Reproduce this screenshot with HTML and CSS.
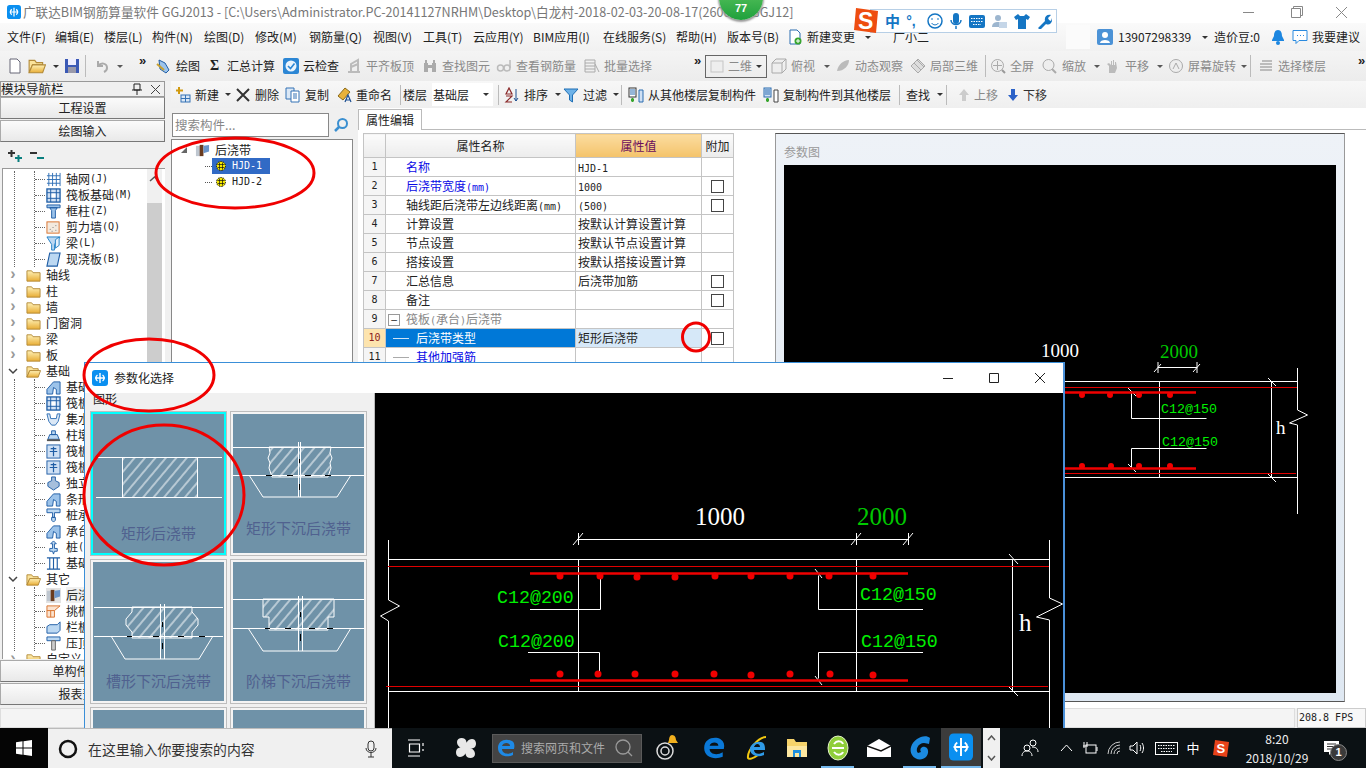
FILE: index.html
```html
<!DOCTYPE html>
<html lang="zh-CN">
<head>
<meta charset="utf-8">
<title>广联达BIM钢筋算量软件</title>
<link rel="stylesheet" href="styles.css">
</head>
<body>
<svg class="defs" aria-hidden="true">
  <defs>
    <pattern id="hatch" width="8" height="8" patternUnits="userSpaceOnUse" patternTransform="rotate(-50)"><line x1="0" y1="4" x2="8" y2="4" stroke="#fff" stroke-width="1"/></pattern>
    <linearGradient id="fold" x1="0" y1="0" x2="0" y2="1"><stop offset="0" stop-color="#fff2b8"/><stop offset="1" stop-color="#e8ad35"/></linearGradient>
    <symbol id="logo" viewBox="0 0 16 16"><rect x="0" y="0" width="16" height="16" rx="3" fill="#0a8ff0"/><path d="M8 3v10M3 8h10M5.500 5a3.600 3.600 0 0 0 0 6M10.500 5a3.600 3.600 0 0 1 0 6" fill="none" stroke="#fff" stroke-width="1.400"/></symbol>
    <symbol id="folder" viewBox="0 0 16 16"><path d="M1 3h5l1.500 2H15v9H1z" fill="url(#fold)" stroke="#b38b3a"/></symbol>
    <symbol id="folderopen" viewBox="0 0 16 16"><path d="M1 3h5l1.500 2H13v2H4L1 14z" fill="#fbe39a" stroke="#b38b3a"/><path d="M4 7h11.500L13 14H1z" fill="url(#fold)" stroke="#b38b3a"/></symbol>
    <symbol id="grid" viewBox="0 0 16 16"><path d="M3 1v14M7 1v14M11 1v14M15 1v14M1 4h14M1 8h14M1 12h14" stroke="#2f6fb5" fill="none"/></symbol>
    <symbol id="raft" viewBox="0 0 16 16"><rect x="1" y="1" width="14" height="14" fill="#cfe0f4" stroke="#1f5da5" stroke-width="1.400"/><path d="M5 1v14M11 1v14M1 5h14M1 11h14" stroke="#1f5da5"/><rect x="6" y="6" width="4" height="4" fill="#fff"/></symbol>
    <symbol id="col" viewBox="0 0 16 16"><path d="M1 1h14v3H1zM4 4h8L10 7v8H6V7z" fill="#9cc3ea" stroke="#1f5da5"/></symbol>
    <symbol id="wall" viewBox="0 0 16 16"><rect x="1" y="2" width="13" height="12" fill="#f3eadf" stroke="#d8712c"/><path d="M4 10h1M7 8h1M10 11h1M6 12h1M10 6h1" stroke="#777"/></symbol>
    <symbol id="beam" viewBox="0 0 16 16"><path d="M1 1h14L9 9v6H6V9z" fill="#bcd8f2" stroke="#1f7fc5"/><path d="M10 4l4-3v9l-4 3z" fill="#e6f1fb" stroke="#1f7fc5"/></symbol>
    <symbol id="slab" viewBox="0 0 16 16"><path d="M4 1h11l-3 14H1z" fill="#bcd8f2" stroke="#1f5da5" stroke-width="1.200"/></symbol>
    <symbol id="fbeam" viewBox="0 0 16 16"><path d="M1 15v-5l7-8h7v13h-4v-5l-3-2-1 7z" fill="#9cc3ea" stroke="#1f5da5"/></symbol>
    <symbol id="pit" viewBox="0 0 16 16"><path d="M1 2h3l1 5h6l1-5h3l-2 8-3 4H6l-3-4z" fill="#dbe8f6" stroke="#2f6fb5"/></symbol>
    <symbol id="pier" viewBox="0 0 16 16"><path d="M6 3h4v4H6zM4 7h8l2 5H2z" fill="#bcd8f2" stroke="#1f5da5"/><path d="M1 13h14" stroke="#555" stroke-width="2"/></symbol>
    <symbol id="cross" viewBox="0 0 16 16"><rect x="1" y="1" width="14" height="14" fill="#cfe0f4" stroke="#1f5da5"/><path d="M8 3v10M4 8h8M5 5h6" stroke="#1f5da5" stroke-width="1.300"/></symbol>
    <symbol id="bolt" viewBox="0 0 16 16"><path d="M6 1h4v4l4 2v4l-6 4-6-4V7l4-2z" fill="#a6bfdc" stroke="#1f5da5"/></symbol>
    <symbol id="cap" viewBox="0 0 16 16"><path d="M1 1h14v4H9v5H7V5H1zM6 10h4v3l-2 2-2-2z" fill="#bcd8f2" stroke="#1f5da5"/></symbol>
    <symbol id="pile" viewBox="0 0 16 16"><path d="M8 1l3 3H9v5h3v3H9l-1 3-1-3H4V9h3V4H5z" fill="#bcd8f2" stroke="#1f5da5"/></symbol>
    <symbol id="strip" viewBox="0 0 16 16"><path d="M1 2h14M1 14h14M4 2v12M8 2v12M12 2v12" stroke="#1f5da5" fill="none" stroke-width="1.200"/></symbol>
    <symbol id="jd" viewBox="0 0 16 16"><path d="M1 3h5v11H1z" fill="#bfc7d0"/><path d="M5 2h4v12H5z" fill="#6a3b1e"/><path d="M9 3l6-1v7l-6 2z" fill="#6b95c9"/></symbol>
    <symbol id="eave" viewBox="0 0 16 16"><path d="M1 2h14L9 7v7H1z" fill="#fbe3cf" stroke="#d8712c"/><path d="M1 7h8M5 7v7" stroke="#d8712c"/></symbol>
    <symbol id="rail" viewBox="0 0 16 16"><path d="M1 7l3-2h8l3-3v9l-3 3H1z" fill="#bcd8f2" stroke="#1f5da5"/></symbol>
    <symbol id="top" viewBox="0 0 16 16"><path d="M1 1h14v4H1z" fill="#bcd8f2" stroke="#1f5da5"/><path d="M6 5h4v10H6z" fill="#ccc" stroke="#666"/></symbol>
    <symbol id="hjd" viewBox="0 0 12 12"><circle cx="6" cy="6" r="4.500" fill="#f7ea00" stroke="#111" stroke-dasharray="1.500 1"/><path d="M2.500 4.500h7M2.500 7.500h7M4.500 2.500v7M7.500 2.500v7" stroke="#111" stroke-width=".7"/></symbol>
    <symbol id="arr" viewBox="0 0 7 7"><path d="M0 2h6L3 5z"/></symbol>
  </defs>
</svg>

<div class="app">
  <header class="titlebar">
    <svg class="ic14"><use href="#logo"/></svg>
    <span class="titletext">广联达BIM钢筋算量软件 GGJ2013 - [C:\Users\Administrator.PC-20141127NRHM\Desktop\白龙村-2018-02-03-20-08-17(2600版).GGJ12]</span>
    <div class="winbtns">
      <svg width="50" height="12" viewBox="0 0 50 12"><path d="M20 6.500h11" stroke="#888"/></svg>
      <svg width="46" height="12" viewBox="0 0 46 12"><path d="M18.500 2.500h9v9h-9zM20.500 2.500V.5h9v9h-2" fill="none" stroke="#888"/></svg>
      <svg width="46" height="12" viewBox="0 0 46 12"><path d="M17 1l11 11M28 1L17 12" stroke="#888"/></svg>
    </div>
  </header>

  <nav class="menubar">
    <span>文件(F)</span><span>编辑(E)</span><span>楼层(L)</span><span>构件(N)</span><span>绘图(D)</span><span>修改(M)</span><span>钢筋量(Q)</span><span>视图(V)</span><span>工具(T)</span><span>云应用(Y)</span><span>BIM应用(I)</span><span>在线服务(S)</span><span>帮助(H)</span><span>版本号(B)</span>
    <span class="ti"><svg class="ic16" viewBox="0 0 16 16"><path d="M3 1h7l3 3v11H3z" fill="#fff" stroke="#2b6cb0"/><circle cx="11" cy="12" r="3.500" fill="#38a52e"/><path d="M9 12h4M11 10v4" stroke="#fff"/></svg>新建变更<svg class="arr arrgap"><use href="#arr"/></svg></span>
    <span>广小二</span>
    <span class="menublank"></span>
    <span class="ti user"><svg class="ic16" viewBox="0 0 16 16"><rect width="16" height="16" rx="2" fill="#4b92d6"/><circle cx="8" cy="6" r="3" fill="#fff"/><path d="M3 14c0-4 10-4 10 0z" fill="#fff"/></svg>13907298339<svg class="arr arrgap"><use href="#arr"/></svg></span>
    <span>造价豆:0</span>
    <svg class="ic16" viewBox="0 0 16 16"><path d="M8 1c3 0 4 3 4 6l2 4v1H2v-1l2-4c0-3 1-6 4-6z" fill="#1c86e0"/><circle cx="8" cy="14" r="2" fill="#1c86e0"/></svg>
    <span class="ti"><svg class="ic16" viewBox="0 0 16 16"><path d="M1 1.500h14v10H7l-3 3v-3H1z" fill="#fff" stroke="#2a8adf"/><path d="M5 6.500h1M8 6.500h1M11 6.500h1" stroke="#2a8adf"/></svg>我要建议</span>
  </nav>

  <div class="toolbar1">
    <svg class="ic16" viewBox="0 0 16 16"><path d="M3 1h7l3 3v11H3z" fill="#fff" stroke="#667"/></svg>
    <svg class="ic18" viewBox="0 0 16 16"><use href="#folderopen"/></svg>
    <svg class="arr"><use href="#arr"/></svg>
    <svg class="ic16" viewBox="0 0 16 16"><rect x="1" y="1" width="14" height="14" fill="#3b59b5"/><rect x="4" y="1" width="8" height="6" fill="#eef"/><rect x="4" y="9" width="8" height="6" fill="#99a"/></svg>
    <i class="sep"></i>
    <svg class="ic16 dim" viewBox="0 0 16 16"><path d="M4 3v5h5M4 8c3-4 9-3 9 2 0 2-1 3-3 4" fill="none" stroke="#999" stroke-width="2"/></svg>
    <svg class="arr dim"><use href="#arr"/></svg>
    <b class="more">»</b>
    <span class="ti"><svg class="ic16" viewBox="0 0 16 16"><path d="M3 2l6 3 4 7-3 3-6-4z" fill="#9cc3ea" stroke="#1f5da5"/><path d="M1 6l7 6" stroke="#c9a02e" stroke-width="2"/></svg>绘图</span>
    <span class="ti sigma"><b>Σ</b>汇总计算</span>
    <span class="ti"><svg class="ic16" viewBox="0 0 16 16"><rect width="16" height="16" rx="2" fill="#2c86d4"/><circle cx="8" cy="8" r="5.500" fill="#eaf4fd"/><path d="M5 8l2.500 2.500L11.500 5.500" fill="none" stroke="#2c86d4" stroke-width="1.600"/></svg>云检查</span>
    <span class="ti off"><svg class="ic16" viewBox="0 0 16 16"><path d="M2 14h12M5 14V6l7-4v12M5 9l7-3" fill="none" stroke="#bbb" stroke-width="2"/></svg>平齐板顶</span>
    <span class="ti off"><svg class="ic16" viewBox="0 0 16 16"><path d="M2 5h4v9H2zM10 5h4v9h-4zM6 7h4v3H6zM3 2h2v3H3zM11 2h2v3h-2z" fill="#aaa"/></svg>查找图元</span>
    <span class="ti off"><svg class="ic16" viewBox="0 0 16 16"><circle cx="4.500" cy="10" r="3" fill="none" stroke="#bbb" stroke-width="1.500"/><circle cx="11" cy="10" r="3" fill="none" stroke="#bbb" stroke-width="1.500"/><path d="M14 10V2" stroke="#bbb" stroke-width="1.500"/></svg>查看钢筋量</span>
    <span class="ti off"><svg class="ic16" viewBox="0 0 16 16"><path d="M1 2h10v12H1zM1 5h10M1 8h10M1 11h10M11 6l4 8" fill="none" stroke="#aaa"/></svg>批量选择</span>
    <b class="more">»</b>
    <span class="combo2d"><svg class="ic16 dim" viewBox="0 0 16 16"><rect x="2" y="3" width="12" height="11" fill="#eee" stroke="#bbb"/></svg><span class="offtxt">二维</span><svg class="arr"><use href="#arr"/></svg></span>
    <span class="ti off"><svg class="ic16" viewBox="0 0 16 16"><path d="M1 5h10v10H1zM1 5l4-4h10L11 5M11 15l4-4V1" fill="#eee" stroke="#aaa"/></svg>俯视</span>
    <svg class="arr dim"><use href="#arr"/></svg>
    <span class="ti off"><svg class="ic16" viewBox="0 0 16 16"><path d="M2 13C3 7 8 2 14 2 14 8 9 13 2 13z" fill="#bbb"/></svg>动态观察</span>
    <span class="ti off"><svg class="ic16" viewBox="0 0 16 16"><path d="M8 1l7 7-7 7-7-7z" fill="#ddd" stroke="#aaa"/><path d="M4 5l7 7M7 2l7 7" stroke="#aaa"/></svg>局部三维</span>
    <i class="sep"></i>
    <span class="ti off"><svg class="ic16" viewBox="0 0 16 16"><circle cx="7.500" cy="7.500" r="6" fill="#eee" stroke="#aaa"/><path d="M7.500 3v9M3 7.500h9" stroke="#aaa"/><path d="M12 12l3 3" stroke="#999" stroke-width="2"/></svg>全屏</span>
    <span class="ti off"><svg class="ic16" viewBox="0 0 16 16"><circle cx="6.500" cy="7" r="5.500" fill="#eee" stroke="#aaa"/><path d="M10 11l4 4" stroke="#aaa" stroke-width="2"/></svg>缩放</span>
    <svg class="arr dim"><use href="#arr"/></svg>
    <span class="ti off"><svg class="ic16" viewBox="0 0 16 16"><path d="M4 15V8l-2-2 2-1 2 2V3h1v4h1V2h1v5h1V4h1l1 6-2 5z" fill="#bbb"/></svg>平移</span>
    <svg class="arr dim"><use href="#arr"/></svg>
    <span class="ti off"><svg class="ic16" viewBox="0 0 16 16"><circle cx="8" cy="8" r="6.500" fill="#eee" stroke="#aaa"/><path d="M5 11l3-6 3 6" fill="none" stroke="#aaa"/></svg>屏幕旋转</span>
    <svg class="arr dim"><use href="#arr"/></svg>
    <i class="sep"></i>
    <span class="ti off"><svg class="ic16" viewBox="0 0 16 16"><path d="M2 6h12M2 9h12M2 12h12M4 3h10" stroke="#aaa" stroke-width="1.500"/></svg>选择楼层</span>
    <b class="more">»</b>
  </div>

  <div class="main">
    <aside class="leftpanel">
      <div class="navhead"><span>模块导航栏</span><span class="navbtns"><svg width="10" height="12" viewBox="0 0 10 12"><path d="M2 1h6v6H2zM0 7h10M5 7v5" stroke="#222" fill="none"/></svg><svg width="9" height="9" viewBox="0 0 9 9"><path d="M0 0l9 9M9 0L0 9" stroke="#444"/></svg></span></div>
      <div class="navbtn">工程设置</div>
      <div class="navbtn">绘图输入</div>
      <div class="treeicons"><svg width="16" height="14" viewBox="0 0 16 14"><path d="M1 4h7M4.500 1v7" stroke="#333" stroke-width="2"/><path d="M8 9h7M11.500 6v7" stroke="#0a7f7f" stroke-width="2"/></svg><svg width="16" height="14" viewBox="0 0 16 14"><path d="M1 4h7" stroke="#333" stroke-width="2"/><path d="M8 9h7" stroke="#0a7f7f" stroke-width="2"/></svg></div>
      <div class="treebox">
        <div class="tree">
          <div class="g1"><div class="g2">
            <div class="r2"><svg class="ic15"><use href="#grid"/></svg>轴网<span class="lat">(J)</span></div>
            <div class="r2"><svg class="ic15"><use href="#raft"/></svg>筏板基础<span class="lat">(M)</span></div>
            <div class="r2"><svg class="ic15"><use href="#col"/></svg>框柱<span class="lat">(Z)</span></div>
            <div class="r2"><svg class="ic15"><use href="#wall"/></svg>剪力墙<span class="lat">(Q)</span></div>
            <div class="r2"><svg class="ic15"><use href="#beam"/></svg>梁<span class="lat">(L)</span></div>
            <div class="r2"><svg class="ic15"><use href="#slab"/></svg>现浇板<span class="lat">(B)</span></div>
          </div></div>
          <div class="r1"><i class="chev">›</i><svg class="ic15"><use href="#folder"/></svg>轴线</div>
          <div class="r1"><i class="chev">›</i><svg class="ic15"><use href="#folder"/></svg>柱</div>
          <div class="r1"><i class="chev">›</i><svg class="ic15"><use href="#folder"/></svg>墙</div>
          <div class="r1"><i class="chev">›</i><svg class="ic15"><use href="#folder"/></svg>门窗洞</div>
          <div class="r1"><i class="chev">›</i><svg class="ic15"><use href="#folder"/></svg>梁</div>
          <div class="r1"><i class="chev">›</i><svg class="ic15"><use href="#folder"/></svg>板</div>
          <div class="r1"><svg class="chevopen" viewBox="0 0 10 7"><path d="M1 1l4 4 4-4" fill="none" stroke="#444" stroke-width="1.500"/></svg><svg class="ic15"><use href="#folderopen"/></svg>基础</div>
          <div class="g1"><div class="g2">
            <div class="r2"><svg class="ic15"><use href="#fbeam"/></svg>基础梁<span class="lat">(F)</span></div>
            <div class="r2"><svg class="ic15"><use href="#raft"/></svg>筏板基础<span class="lat">(M)</span></div>
            <div class="r2"><svg class="ic15"><use href="#pit"/></svg>集水坑<span class="lat">(K)</span></div>
            <div class="r2"><svg class="ic15"><use href="#pier"/></svg>柱墩<span class="lat">(Y)</span></div>
            <div class="r2"><svg class="ic15"><use href="#cross"/></svg>筏板主筋<span class="lat">(R)</span></div>
            <div class="r2"><svg class="ic15"><use href="#cross"/></svg>筏板负筋<span class="lat">(X)</span></div>
            <div class="r2"><svg class="ic15"><use href="#bolt"/></svg>独立基础<span class="lat">(D)</span></div>
            <div class="r2"><svg class="ic15"><use href="#fbeam"/></svg>条形基础<span class="lat">(T)</span></div>
            <div class="r2"><svg class="ic15"><use href="#cap"/></svg>桩承台<span class="lat">(V)</span></div>
            <div class="r2"><svg class="ic15"><use href="#fbeam"/></svg>承台梁<span class="lat">(F)</span></div>
            <div class="r2"><svg class="ic15"><use href="#pile"/></svg>桩<span class="lat">(U)</span></div>
            <div class="r2"><svg class="ic15"><use href="#strip"/></svg>基础板带<span class="lat">(W)</span></div>
          </div></div>
          <div class="r1"><svg class="chevopen" viewBox="0 0 10 7"><path d="M1 1l4 4 4-4" fill="none" stroke="#444" stroke-width="1.500"/></svg><svg class="ic15"><use href="#folderopen"/></svg>其它</div>
          <div class="g1"><div class="g2">
            <div class="r2"><svg class="ic15 hl"><use href="#jd"/></svg><span class="hltxt">后浇带<span class="lat">(JD)</span></span></div>
            <div class="r2"><svg class="ic15"><use href="#eave"/></svg>挑檐<span class="lat">(T)</span></div>
            <div class="r2"><svg class="ic15"><use href="#rail"/></svg>栏板<span class="lat">(K)</span></div>
            <div class="r2"><svg class="ic15"><use href="#top"/></svg>压顶<span class="lat">(YD)</span></div>
          </div></div>
          <div class="r1"><i class="chev">›</i><svg class="ic15"><use href="#folder"/></svg>自定义</div>
        </div>
        <div class="vscroll"><svg width="15" height="12" viewBox="0 0 15 12"><path d="M3 8l4.500-4L12 8" fill="none" stroke="#555" stroke-width="1.500"/></svg><div class="thumb"></div></div>
      </div>
      <div class="navbtn">单构件输入</div>
      <div class="navbtn">报表预览</div>
    </aside>

    <div class="rightcol">
      <div class="toolbar2">
        <span class="ti"><svg class="ic16" viewBox="0 0 16 16"><path d="M4 0v7M1 3.500h7" stroke="#d09a10" stroke-width="2"/><rect x="6" y="8" width="9" height="7" fill="#dbe8f6" stroke="#3472b5"/><path d="M6 11.500h9M10.500 8v7" stroke="#3472b5"/></svg>新建</span>
        <svg class="arr"><use href="#arr"/></svg>
        <span class="ti del"><svg class="ic14b" viewBox="0 0 14 14"><path d="M1 1l12 12M13 1L1 13" stroke="#333" stroke-width="2"/></svg>删除</span>
        <span class="ti"><svg class="ic16" viewBox="0 0 16 16"><path d="M1 1h8v11H1z" fill="#dbe8f6" stroke="#3472b5"/><path d="M6 4h8v11H6z" fill="#fff" stroke="#3472b5"/><path d="M8 7h4M8 9h4M8 11h4" stroke="#3472b5"/></svg>复制</span>
        <span class="ti"><svg class="ic16" viewBox="0 0 16 16"><path d="M2 9l7-8 5 4-7 8z" fill="#e9b23a" stroke="#8a6a1a"/><path d="M9 15l3-7 3 7M10 13h4" fill="none" stroke="#1d4f91" stroke-width="1.200"/></svg>重命名</span>
        <i class="sep"></i>
        <span>楼层</span>
        <span class="floorcombo">基础层<svg class="arr"><use href="#arr"/></svg></span>
        <i class="sep"></i>
        <span class="ti"><svg class="ic16" viewBox="0 0 16 16"><path d="M5 1L2 7h6zM2 9h6L2 15h6" fill="none" stroke="#8a2a2a" stroke-width="1.200"/><path d="M12 2v12M10 11l2 3 2-3" fill="none" stroke="#1d4f91"/></svg>排序</span>
        <svg class="arr"><use href="#arr"/></svg>
        <span class="ti"><svg class="ic16" viewBox="0 0 16 16"><path d="M1 2h14L9.500 8v7L6.500 13V8z" fill="#6db2e8" stroke="#1f6fb5"/></svg>过滤</span>
        <svg class="arr"><use href="#arr"/></svg>
        <i class="sep"></i>
        <span class="ti"><svg class="ic16" viewBox="0 0 16 16"><rect x="1" y="1" width="7" height="9" fill="#fff" stroke="#333"/><path d="M2 3h5M2 5h5M2 7h5" stroke="#2b6cb0"/><path d="M11 3h4v12h-4z" fill="#cfe0f4" stroke="#2b6cb0"/><path d="M4.500 11v4M3 13h3" stroke="#38a52e" stroke-width="2"/></svg>从其他楼层复制构件</span>
        <span class="ti"><svg class="ic16" viewBox="0 0 16 16"><rect x="1" y="1" width="7" height="9" fill="#cfe0f4" stroke="#2b6cb0"/><path d="M2 3h5M2 5h5M2 7h5" stroke="#2b6cb0"/><path d="M11 3h4v12h-4z" fill="#fff" stroke="#444"/><path d="M4.500 11v4M3 13h3" stroke="#38a52e" stroke-width="2"/></svg>复制构件到其他楼层</span>
        <i class="sep"></i>
        <span>查找</span>
        <svg class="arr"><use href="#arr"/></svg>
        <i class="sep"></i>
        <span class="ti off up1"><svg class="ic16" viewBox="0 0 16 16"><path d="M8 2l5 6h-3v6H6V8H3z" fill="#ccc"/></svg>上移</span>
        <span class="ti off2 up1"><svg class="ic16" viewBox="0 0 16 16"><path d="M8 14l5-6h-3V2H6v6H3z" fill="#2c62c8"/></svg>下移</span>
      </div>

      <div class="content">
        <section class="comppanel">
          <div class="searchrow"><div class="searchbox">搜索构件...</div><svg class="ic16" viewBox="0 0 16 16"><circle cx="9.500" cy="6.500" r="4.500" fill="none" stroke="#3a8fd0" stroke-width="2"/><path d="M6 10l-4 4" stroke="#3a8fd0" stroke-width="2.500"/></svg></div>
          <div class="complist">
            <div class="cparent"><svg class="chevsm" viewBox="0 0 8 8"><path d="M7 1v6H1z" fill="#666"/></svg><svg class="ic15"><use href="#jd"/></svg>后浇带</div>
            <div class="cchild sel"><svg class="ic12"><use href="#hjd"/></svg><span class="cname">HJD-1</span></div>
            <div class="cchild"><svg class="ic12"><use href="#hjd"/></svg><span class="cname dark">HJD-2</span></div>
          </div>
        </section>

        <section class="props">
          <div class="tabs"><div class="tab">属性编辑</div></div>
          <div class="propsbody">
            <div class="tablewrap">
              <table class="ptable">
                <colgroup><col class="c0"><col class="c1"><col class="c2"><col class="c3"></colgroup>
                <thead><tr><th></th><th>属性名称</th><th class="valhead">属性值</th><th>附加</th></tr></thead>
                <tbody>
                  <tr><td class="n">1</td><td class="k blue">名称</td><td class="v"><span class="lat">HJD-1</span></td><td></td></tr>
                  <tr><td class="n">2</td><td class="k blue">后浇带宽度<span class="lat">(mm)</span></td><td class="v"><span class="lat">1000</span></td><td class="cb"><i></i></td></tr>
                  <tr><td class="n">3</td><td class="k">轴线距后浇带左边线距离<span class="lat">(mm)</span></td><td class="v"><span class="lat">(500)</span></td><td class="cb"><i></i></td></tr>
                  <tr><td class="n">4</td><td class="k">计算设置</td><td class="v">按默认计算设置计算</td><td></td></tr>
                  <tr><td class="n">5</td><td class="k">节点设置</td><td class="v">按默认节点设置计算</td><td></td></tr>
                  <tr><td class="n">6</td><td class="k">搭接设置</td><td class="v">按默认搭接设置计算</td><td></td></tr>
                  <tr><td class="n">7</td><td class="k">汇总信息</td><td class="v">后浇带加筋</td><td class="cb"><i></i></td></tr>
                  <tr><td class="n">8</td><td class="k">备注</td><td class="v"></td><td class="cb"><i></i></td></tr>
                  <tr><td class="n">9</td><td class="k gray"><span class="minus">−</span>筏板<span class="lat">(</span>承台<span class="lat">)</span>后浇带</td><td class="v"></td><td></td></tr>
                  <tr class="selrow"><td class="n">10</td><td class="k sub"><span class="cline"></span>后浇带类型</td><td class="v">矩形后浇带</td><td class="cb"><i></i></td></tr>
                  <tr><td class="n">11</td><td class="k sub blue"><span class="cline"></span>其他加强筋</td><td class="v"></td><td></td></tr>
                </tbody>
              </table>
            </div>
            <div class="preview">
              <div class="previewtitle">参数图</div>
              <svg class="cadsmall" viewBox="784 165 552 528" width="552" height="528">
                <text class="cadw s19" x="1041" y="357">1000</text>
                <text class="cadg s19" x="1160" y="358">2000</text>
                <path class="wl" d="M1158 362v11M1197 362v11M1154 372l7-8M1193 372l7-8M1158 367.500h39M1040 381.500h257M1159.500 381v96M1060 477.500h237M1131.500 392v26.500h75M1131.500 468v-19.500h75M1128 388l8 8M1128 464l8 8M1297.500 368v42l10 5-18 8 8 2v89M1271.500 381v96M1268 378l8 8M1268 474l8 8"/>
                <path class="rt" d="M1040 387.500h257M1040 473.500h256"/>
                <path class="rw" d="M1040 392.500h156M1040 468.500h156"/>
                <g class="dots"><circle cx="1082" cy="395" r="3"/><circle cx="1110" cy="395" r="3"/><circle cx="1139" cy="395" r="3"/><circle cx="1170" cy="395" r="3"/><circle cx="1082" cy="466" r="3"/><circle cx="1111" cy="466" r="3"/><circle cx="1139" cy="466" r="3"/><circle cx="1170" cy="466" r="3"/></g>
                <text class="cadm s13" x="1161" y="413">C12@150</text>
                <text class="cadm s13" x="1162" y="446">C12@150</text>
                <text class="cadw s19" x="1276" y="434">h</text>
              </svg>
            </div>
          </div>
        </section>
      </div>
    </div>
  </div>

  <footer class="statusbar"><div class="statusblank"></div><div class="fps">208.8 FPS</div></footer>
</div>

<div class="taskbar">
  <div class="start"><svg width="16" height="16" viewBox="0 0 16 16"><path d="M0 2.200l6.500-.9v6.200H0zM7.500 1.200L16 0v7.500H7.500zM0 8.500h6.500v6.200L0 13.800zM7.500 8.500H16V16l-8.500-1.200z" fill="#fff"/></svg></div>
  <div class="tasksearch"><svg width="20" height="20" viewBox="0 0 20 20"><circle cx="10" cy="10" r="8" fill="none" stroke="#111" stroke-width="2.500"/></svg><span class="tsearchtxt">在这里输入你要搜索的内容</span><svg width="12" height="18" viewBox="0 0 12 18"><rect x="3" y="1" width="6" height="10" rx="3" fill="none" stroke="#333"/><path d="M1 8c0 6 10 6 10 0M6 13v4M3 17h6" fill="none" stroke="#333"/></svg></div>
  <div class="tk w48"><svg width="18" height="18" viewBox="0 0 18 18"><path d="M1 1h12M1 17h12M2.500 5h10v8h-10zM16 4v3M16 10v2" fill="none" stroke="#fff" stroke-width="1.200"/></svg></div>
  <div class="tk w52"><svg width="24" height="24" viewBox="0 0 24 24"><path d="M12 12C7 13 3 10 3 6s5-5 8-3c2 2 2 6 1 9zM12 12c-1-5 2-9 6-9s5 5 3 8c-2 2-6 2-9 1zM12 12c5-1 9 2 9 6s-5 5-8 3c-2-2-2-6-1-9zM12 12c1 5-2 9-6 9s-5-5-3-8c2-2 6-2 9-1z" fill="#e8e8e8"/></svg></div>
  <div class="widget"><svg width="20" height="20" viewBox="0 0 20 20"><path d="M18 11H6c0 5 7 6 11 3v3c-6 3-15 1-15-7S10 0 16 3c2 1 3 4 2 8zM6 8h8c0-4-7-4-8 0z" fill="#1e8ae6"/></svg><span class="widgettxt">搜索网页和文件</span><svg width="20" height="20" viewBox="0 0 20 20"><circle cx="9" cy="9" r="7" fill="none" stroke="#999" stroke-width="1.300"/><path d="M14 14l4 4" stroke="#999" stroke-width="1.300"/></svg></div>
  <div class="tk w50"><svg width="26" height="28" viewBox="0 0 26 28"><circle cx="11" cy="17" r="8" fill="none" stroke="#ddd" stroke-width="1.500"/><circle cx="11" cy="17" r="4" fill="none" stroke="#ddd" stroke-width="1.500"/><path d="M18 1c3 0 4 3 4 5l2 3H14l1-3c0-2 1-5 3-5z" fill="#f2b01e"/></svg></div>
  <div class="tk w44"><svg width="22" height="24" viewBox="0 0 20 22"><path d="M19 12H6c0 5 7 6 12 3v4c-7 3-17 1-17-8S11 0 16 3c3 2 4 5 3 9zM6 9h8c0-4-7-4-8 0z" fill="#0a78d7"/></svg></div>
  <div class="tk w41"><svg width="26" height="26" viewBox="0 0 26 26"><path d="M22 2C14 2 3 16 4 23c1 2 6 0 10-3" fill="none" stroke="#f2c811" stroke-width="2"/><path d="M21 15H10c0 4 5 5 10 2v3c-7 3-14 0-14-6S17 4 20 9c1 2 1 4 1 6zM10 12h6c0-4-5-4-6 0z" fill="#2f9be8"/></svg></div>
  <div class="tk w40"><svg width="22" height="20" viewBox="0 0 22 20"><path d="M1 1h7l2 3h11v15H1z" fill="#f6d36b"/><path d="M1 8h20v11H1z" fill="#fde7a0"/><path d="M7 19v-7h8v7h-2v-4H9v4z" fill="#1f8fdc"/></svg></div>
  <div class="tk w41 ul"><svg width="22" height="26" viewBox="0 0 22 26"><ellipse cx="11" cy="13" rx="10" ry="12" fill="#8fce3a" stroke="#e5f3c9"/><path d="M5 13h12M7 9c3-4 8-3 9 0M7 17c3 4 8 3 9 0" fill="none" stroke="#fff" stroke-width="2"/></svg></div>
  <div class="tk w41"><svg width="24" height="18" viewBox="0 0 24 18"><path d="M0 7L12 0l12 7v11H0z" fill="#fff"/><path d="M0 7l14 5L24 7" fill="none" stroke="#111" stroke-width="1.500"/></svg></div>
  <div class="tk w41 ul"><svg width="24" height="26" viewBox="0 0 24 26"><path d="M22 3c-3-3-9-2-13 1C3 8 1 15 4 20c3 5 10 6 14 2 3-3 3-9-1-10-3-1-6 2-4 5l-3 1c-3-3 0-10 6-10 2 0 4 1 5 1z" fill="#1b8ae0"/></svg></div>
  <div class="tk active"><svg width="24" height="28" viewBox="0 0 16 18"><rect y="0" width="16" height="18" rx="3" fill="#0a8ff0"/><path d="M8 3v12M3 9h10M5.500 6a3.600 3.600 0 0 0 0 6M10.500 6a3.600 3.600 0 0 1 0 6" fill="none" stroke="#fff" stroke-width="1.300"/></svg></div>
  <div class="tscroll"><svg width="9" height="6" viewBox="0 0 9 6"><path d="M1 5l3.500-4L8 5" fill="none" stroke="#555" stroke-width="1.500"/></svg><svg width="9" height="6" viewBox="0 0 9 6"><path d="M1 1l3.500 4L8 1" fill="none" stroke="#555" stroke-width="1.500"/></svg></div>
  <div class="tray">
    <div class="tc w30"><svg width="18" height="18" viewBox="0 0 18 18"><circle cx="6" cy="9" r="3" fill="none" stroke="#fff"/><circle cx="12" cy="4" r="3" fill="none" stroke="#fff"/><path d="M1 17c0-4 3-5 5-5s5 1 5 5M11 8c3 0 6 1 6 5" fill="none" stroke="#fff"/></svg></div>
    <div class="tc w10"></div>
    <div class="tc w23"><svg width="13" height="8" viewBox="0 0 13 8"><path d="M1 7l5.500-6L12 7" fill="none" stroke="#fff"/></svg></div>
    <div class="tc w24"><svg width="16" height="14" viewBox="0 0 16 14"><rect x="4" y="4" width="10" height="8" fill="none" stroke="#fff"/><path d="M15 6v4M2 1v6M5 1v3M1 5h5" stroke="#fff"/></svg></div>
    <div class="tc w25"><svg width="16" height="14" viewBox="0 0 16 14"><path d="M1 13A12 12 0 0 1 13 1M4 13a9 9 0 0 1 9-9M7 13a6 6 0 0 1 6-6M10 13a3 3 0 0 1 3-3" fill="none" stroke="#ccc"/></svg></div>
    <div class="tc w20"><svg width="16" height="14" viewBox="0 0 16 14"><path d="M1 5h3l4-4v12L4 9H1zM11 4c1 2 1 4 0 6M13 2c2 3 2 7 0 10" fill="none" stroke="#fff"/></svg></div>
    <div class="tc w38"><svg width="23" height="13" viewBox="0 0 23 13"><rect x=".5" y=".5" width="22" height="12" fill="none" stroke="#fff"/><path d="M3 3.500h17M3 6.500h17M6 9.500h11" stroke="#fff" stroke-dasharray="1.500 1"/></svg></div>
    <div class="tc w16 zh">中</div>
    <div class="tc w40"><svg width="16" height="17" viewBox="0 0 16 17"><path d="M2 0l14 2-2 15-14-2z" fill="#e8431a"/><text class="sglyph" x="3.500" y="13">S</text></svg></div>
    <div class="tc clock"><span>8:20</span><span>2018/10/29</span></div>
    <div class="tc w36 notif"><svg width="15" height="14" viewBox="0 0 15 14"><path d="M0 0h15v11H8l-3 3v-3H0z" fill="#fff"/><path d="M3 3h9M3 5.500h9M3 8h6" stroke="#333"/></svg><span class="badge">1</span></div>
  </div>
</div>

<div class="greenball"><span>77</span></div>

<div class="ime">
  <svg class="sglogo" width="26" height="27" viewBox="0 0 26 27"><path d="M3 1l22 3-2 22-22-3z" fill="#ee4d10"/><text class="sglyphbig" x="5" y="22">S</text></svg>
  <span class="imezh">中</span>
  <span class="imepun">°,</span>
  <svg width="16" height="16" viewBox="0 0 16 16"><circle cx="8" cy="8" r="7" fill="none" stroke="#1576c4" stroke-width="1.500"/><path d="M5 5v2M11 5v2M4.500 10c2 2.500 5 2.500 7 0" stroke="#1576c4" fill="none"/></svg>
  <svg width="12" height="17" viewBox="0 0 12 17"><rect x="3" y="0" width="6" height="11" rx="3" fill="#1576c4"/><path d="M1 7c0 6 10 6 10 0M6 13v3" fill="none" stroke="#1576c4" stroke-width="1.500"/></svg>
  <svg width="16" height="13" viewBox="0 0 16 13"><rect width="16" height="13" rx="2" fill="#1576c4"/><path d="M2 3.500h12M2 6.500h12M4 9.500h8" stroke="#fff" stroke-dasharray="1.500 1"/></svg>
  <svg width="15" height="14" viewBox="0 0 15 14"><circle cx="6" cy="4" r="3" fill="#9db6cf"/><path d="M0 13c0-4 3-5 6-5s5 1 5 5z" fill="#9db6cf"/><rect x="7" y="8" width="8" height="6" fill="#c5d6e8"/></svg>
  <svg width="16" height="15" viewBox="0 0 16 15"><path d="M4 0L0 3l2 3 2-1v10h8V5l2 1 2-3-4-3-2 2H6z" fill="#1576c4"/></svg>
  <svg width="15" height="15" viewBox="0 0 15 15"><path d="M1 14l7-7c-1-4 2-7 6-6l-3 3 1 2 2 1 1-3c1 4-2 8-6 6l-6 6z" fill="#1576c4"/></svg>
</div>

<section class="dialog">
  <div class="dlgtitle">
    <svg class="ic16"><use href="#logo"/></svg><span class="dlgname">参数化选择</span>
    <div class="dlgbtns">
      <svg width="46" height="12" viewBox="0 0 46 12"><path d="M18 6.500h10" stroke="#222"/></svg>
      <svg width="46" height="12" viewBox="0 0 46 12"><path d="M18.500 1.500h9v9h-9z" fill="none" stroke="#222"/></svg>
      <svg width="46" height="12" viewBox="0 0 46 12"><path d="M18 1l10 10M28 1L18 11" stroke="#222"/></svg>
    </div>
  </div>
  <div class="dlgbody">
    <div class="dlgleft">
      <div class="dlglabel">图形</div>
      <div class="cells">
        <div class="cell selcell"><div class="cellinner">
          <svg viewBox="0 0 131 108" width="131" height="108"><rect x="29" y="43" width="75" height="40" fill="url(#hatch)"/><path class="cw" d="M3 43.500h126M3 83.500h126M29.500 43v40M104.500 43v40"/></svg>
          <div class="celllabel">矩形后浇带</div></div></div>
        <div class="cell"><div class="cellinner">
          <svg viewBox="0 0 131 108" width="131" height="108"><path class="so" fill="url(#hatch)" d="M36 33h62l-1 6 2 5-2 5 1 5-3 9H39l-3-9 1-5-2-5 2-5z"/><path class="cw" d="M0 33.500h131M0 61.500h131M16 61l14 22h74l14-22M65.500 28v55M67.500 28v55"/><path class="ck" d="M33 61.500h6M54 61.500h6M72 61.500h6M92 61.500h6M66.500 45v4M66.500 70v6"/></svg>
          <div class="celllabel up">矩形下沉后浇带</div></div></div>
        <div class="cell"><div class="cellinner">
          <svg viewBox="0 0 131 108" width="131" height="108"><path class="so" fill="url(#hatch)" d="M39 45h60v5l6 7v6l-6 7v6H39v-6l-6-7v-6l6-7z"/><path class="cw" d="M1 45.500h129M1 74.500h129M18 74l14 23h74l14-23M67.500 42v55M71.500 42v55"/><path class="ck" d="M34 74.500h5M60 74.500h6M85 74.500h6M106 74.500h6M69.500 60v5M69.500 81v6"/></svg>
          <div class="celllabel">槽形下沉后浇带</div></div></div>
        <div class="cell"><div class="cellinner">
          <svg viewBox="0 0 131 108" width="131" height="108"><path class="so" fill="url(#hatch)" d="M30 37h71v18h-6v13H36V55h-6z"/><path class="cw" d="M0 37.500h131M0 66.500h131M15 66l15 23h74l14-23M65.500 34v55M69.500 34v55"/><path class="ck" d="M32 66.500h5M52 66.500h6M76 66.500h6M94 66.500h6M67.500 50v5M67.500 72v7"/></svg>
          <div class="celllabel">阶梯下沉后浇带</div></div></div>
        <div class="cell"><div class="cellinner"></div></div>
        <div class="cell"><div class="cellinner"></div></div>
      </div>
    </div>
    <svg class="cadbig" viewBox="375 393 688 335" width="688" height="335">
      <text class="cadw s25" x="695" y="525">1000</text>
      <text class="cadg s25" x="857" y="525">2000</text>
      <path class="wl" d="M578.500 533v12M856.500 533v12M908.500 533v12M573 545l10-12M851 545l10-12M903 545l10-12M578 539.500h330M388 559.500h661M388 691.500h661M578.500 559v132M856.500 559v132M388.500 540v60l11 6-19 10 8 5v107M1049.500 540v58l13 6-26 13 13 3v108M1012.500 559v132M1009 554l9 10M1009 687l9 9M530 609.500h70.500v-34M528 652.500h71.500v24M923 609.500H818.500v-34M923 652.500H818.500v26M815 569l7 9M815 676l7 9"/>
      <path class="rt" d="M388 566.500h661M386 686.500h662"/>
      <path class="rw" d="M530 573.500h378M530 680.500h378"/>
      <g class="dots"><circle cx="560" cy="576" r="3.500"/><circle cx="600" cy="576" r="3.500"/><circle cx="637" cy="577" r="3.500"/><circle cx="675" cy="577" r="3.500"/><circle cx="715" cy="576" r="3.500"/><circle cx="751" cy="576" r="3.500"/><circle cx="790" cy="576" r="3.500"/><circle cx="829" cy="576" r="3.500"/><circle cx="873" cy="576" r="3.500"/><circle cx="560" cy="674" r="3.500"/><circle cx="598" cy="674" r="3.500"/><circle cx="635" cy="674" r="3.500"/><circle cx="675" cy="674" r="3.500"/><circle cx="714" cy="674" r="3.500"/><circle cx="751" cy="675" r="3.500"/><circle cx="790" cy="674" r="3.500"/><circle cx="830" cy="674" r="3.500"/><circle cx="873" cy="675" r="3.500"/></g>
      <text class="cadm s18" x="497" y="603">C12@200</text>
      <text class="cadm s18" x="498" y="647">C12@200</text>
      <text class="cadm s18" x="860" y="600">C12@150</text>
      <text class="cadm s18" x="861" y="647">C12@150</text>
      <text class="cadw s25" x="1019" y="631">h</text>
    </svg>
  </div>
</section>

<svg class="marks" width="1366" height="768" viewBox="0 0 1366 768" aria-hidden="true">
  <ellipse cx="235" cy="173" rx="79" ry="35"/>
  <ellipse cx="696" cy="337" rx="13.500" ry="14"/>
  <ellipse cx="149" cy="375" rx="65" ry="36"/>
  <ellipse cx="164" cy="495" rx="80" ry="70"/>
</svg>
</body>
</html>
```

FILE: styles.css
```css
*{box-sizing:border-box}
html,body{margin:0;padding:0;width:1366px;height:768px;overflow:hidden}
body{position:relative;font:12px/16px "Noto Sans CJK SC","Liberation Sans",sans-serif;color:#222;background:#f0f0f0}
svg{display:block;flex:none}
i{font-style:normal}
.defs{position:absolute;width:0;height:0}
.ic12{width:12px;height:12px}
.ic14{width:14px;height:14px}
.ic14b{width:14px;height:14px}
.ic15{width:15px;height:15px}
.ic16{width:16px;height:16px}
.ic18{width:18px;height:18px}
.arr{width:7px;height:7px;fill:#333}
.arrgap{margin-left:6px}
.dim{opacity:.8}
.lat{font:10px/10px "DejaVu Sans Mono",monospace}
.app{height:728px;display:flex;flex-direction:column}

.titlebar{height:23px;background:#fff;display:flex;align-items:center;padding-left:7px;color:#777;flex:none}
.titletext{margin-left:2px;white-space:nowrap;flex:none;width:1040px;overflow:hidden;font-size:12.640px}
.winbtns{margin-left:auto;display:flex;padding-right:1px}

.menubar{height:28px;flex:none;background:linear-gradient(#fafafa,#f1f1f1);display:grid;align-items:center;padding-left:7px;white-space:nowrap;
  grid-template-columns:48px 49px 48px 52px 51px 54px 64px 50px 50px 60px 70px 73px 51px 60px 106px 173px 31px 117px 56px 22px auto}
.menublank{display:block;width:24px;height:24px;background:#fbfbfb}
.ti{display:flex;align-items:center;gap:4px;white-space:nowrap}
.user{gap:5px}
.toolbar1{height:30px;flex:none;background:linear-gradient(#f4f4f4,#ececec);display:grid;align-items:center;padding-left:7px;
  grid-template-columns:21px 25px 11px 21px 9px 23px 22px 17px 54px 73px 63px 76px 74px 88px 110px 11px 66px 53px 11px 75px 75px 5px 52px 52px 11px 52px 11px 73px 9px 8px 100px auto}
.sep{display:block;width:1px;height:22px;background:#bbb}
.more{font:bold 13px/8px "Liberation Sans",sans-serif;color:#222;align-self:start;margin-top:6px}
.sigma{gap:7px}
.sigma b{font:bold 14px/16px "Liberation Serif",serif;width:10px}
.off{color:#8a8a8a}
.off2{color:#333}
.offtxt{color:#8a8a8a}
.combo2d{display:flex;align-items:center;width:62px;height:23px;border:1px solid #666;padding:0 3px 0 3px;gap:3px}
.combo2d .arr{margin-left:auto}

.main{flex:1;display:flex;min-height:0}
.leftpanel{width:165px;flex:none;display:flex;flex-direction:column;background:#f0f0f0;padding-bottom:2px}
.navhead{height:16px;border:1px solid #999;display:flex;align-items:center;flex:none;font-size:12.500px;justify-content:space-between}
.navbtns{display:flex;align-items:center;gap:9px;padding-right:4px}
.navbtn{height:22px;flex:none;margin-bottom:1px;border:1px solid #aaa;border-right-color:#777;border-bottom-color:#777;background:linear-gradient(#fbfbfb,#e9e9e9);text-align:center;line-height:20px}
.treeicons{height:25px;flex:none;display:flex;align-items:center;gap:6px;padding-left:7px;background:#f0f0f0}
.treebox{flex:1;min-height:0;display:flex;background:#fff;border:1px solid #999;border-width:1px 0 0 1px;margin-left:2px;overflow:hidden;margin-bottom:1px}
.tree{width:144px;padding-top:2px;flex:none;overflow:hidden}
.vscroll{width:15px;background:#f0f0f0;flex:none;padding-top:4px}
.thumb{height:460px;background:#cdcdcd;margin-top:18px}
.r1{height:16px;display:flex;align-items:center;white-space:nowrap;padding-left:5px}
.r1 .ic15{margin:0 5px 0 8px}
.chev{width:10px;font:bold 16px/14px "Liberation Sans",sans-serif;color:#999;text-align:center;display:block;height:16px}
.chevopen{width:10px;height:7px}
.g1{margin-left:11px;border-left:1px dotted #666}
.g2{margin-left:19px;border-left:1px dotted #666}
.r2{height:16px;display:flex;align-items:center;white-space:nowrap;padding-left:11px;position:relative}
.r2::before{content:"";position:absolute;left:0;top:8px;width:10px;border-top:1px dotted #666}
.r2 .ic15{margin-right:5px}
.hl{background:#e3e3e3}
.hltxt{background:#f0f0f0}

.rightcol{flex:1;min-width:0;display:flex;flex-direction:column;padding-left:6px}
.toolbar2{height:27px;flex:none;background:linear-gradient(#f7f7f7,#efefef);display:grid;align-items:center;padding-left:4px;white-space:nowrap;
  grid-template-columns:50px 11px 49px 51px 64px 3px 29px 66px 6px 51px 8px 50px 8px 7px 135px 136px 7px 31px 9px 10px 49px auto}
.del{gap:5px}
.up1{gap:2px}
.floorcombo{display:flex;align-items:center;justify-content:space-between;width:61px;height:23px;background:#fff;padding:0 3px 0 1px}
.toolbar2 .sep{height:20px}

.content{flex:1;min-height:0;display:flex}
.comppanel{width:187px;flex:none;display:flex;flex-direction:column;background:#f0f0f0;padding-top:5px}
.searchrow{display:flex;align-items:center;height:24px;gap:4px;padding-left:1px}
.searchbox{width:157px;height:24px;border:1px solid #888;background:#fff;color:#888;line-height:22px;padding-left:2px;font-size:12.500px}
.complist{margin-top:2px;width:182px;flex:1;background:#fff;border:1px solid #888;padding-top:2px}
.cparent{height:16px;display:flex;align-items:center;padding-left:8px;gap:5px}
.chevsm{width:8px;height:8px}
.cparent .ic15{margin-left:2px}
.cchild{width:58px;height:16px;margin-left:40px;display:flex;align-items:center;gap:5px;padding-left:3px;position:relative}
.cchild::before{content:"";position:absolute;left:-7px;top:8px;width:7px;border-top:1px dotted #555}
.sel{background:#316ac5}
.cname{font:10px/16px "DejaVu Sans Mono",monospace;color:#fff}
.cname.dark{color:#222}

.props{flex:1;min-width:0;background:#fff;display:flex;flex-direction:column}
.tabs{height:22px;flex:none;border-bottom:1px solid #bbb;padding-top:1px;background:#fff}
.tab{width:64px;height:21px;border:1px solid #bbb;border-bottom:0;background:#fff;text-align:center;line-height:20px}
.propsbody{flex:1;min-height:0;display:flex;padding-top:3px}
.tablewrap{width:417px;flex:none;padding-left:5px;overflow:hidden}
.ptable{border-collapse:collapse;table-layout:fixed;width:370px;border-top:1px solid #bbb}
.c0{width:22px}.c1{width:190px}.c2{width:126px}.c3{width:32px}
.ptable th{height:24px;font-weight:400;background:linear-gradient(#fbfbfb,#ececec);border:1px solid #c4c4c4;padding:0}
.ptable .valhead{background:linear-gradient(#fbdca0,#f4c36a);color:#6a0d5c}
.ptable td{height:19px;border:1px solid #c4c4c4;padding:0;white-space:nowrap;line-height:16px}
.ptable .n{background:#f5f5f5;text-align:center;font:10px/16px "DejaVu Sans Mono",monospace}
.k{padding-left:20px!important}
.v{padding-left:2px!important}
.blue{color:#0a0ae6}
.ptable .gray{color:#888;padding-left:2px!important}
.minus{display:inline-block;width:12px;height:12px;border:1px solid #999;margin-right:6px;line-height:9px;text-align:center;color:#333;vertical-align:-1px}
.sub{padding-left:30px!important;position:relative}
.cline{position:absolute;left:7px;top:9px;width:16px;border-top:1px solid #aaa}
.selrow .cline{border-color:#cfe3f5}
.cb i{display:block;width:13px;height:13px;border:1px solid #444;margin:0 auto;background:#fff}
.selrow .n{background:#fde4ae;color:#8a1c1c}
.selrow .k{background:#0078d7;color:#fff}
.selrow .v{background:#d6e8f8}

.preview{width:570px;height:569px;flex:none;border:1px solid #999;border-top-color:#555;border-bottom-color:#555;background:linear-gradient(#eef2f7,#dfe8f2);padding:0 8px 9px 8px;display:flex;flex-direction:column}
.previewtitle{height:31px;flex:none;color:#999;padding-top:10px;line-height:16px}
.cadsmall,.cadbig{background:#000}
.wl,.rt,.rw,.cw,.ck{fill:none}
.wl{stroke:#fff;stroke-width:1}
.rt{stroke:#e00000;stroke-width:1}
.rw{stroke:#f00000;stroke-width:2.500}
.dots{fill:#f00000}
.cw,.so{stroke:#fff;stroke-width:1}
.ck{stroke:#000;stroke-width:1}
.cadw{fill:#fff;font-family:"Liberation Serif",serif}
.cadg{fill:#00c800;font-family:"Liberation Serif",serif}
.cadm{fill:#00f000;font-family:"Liberation Mono",monospace}
.s13{font-size:13.300px}
.s18{font-size:18.300px}
.s19{font-size:19px}
.s25{font-size:25px}

.statusbar{height:20px;flex:none;display:flex;gap:2px;background:#f0f0f0}
.statusblank{flex:1;border:1px solid #ddd;background:#f4f4f4}
.fps{width:69px;border:1px solid #ccc;font:10px/18px "DejaVu Sans Mono",monospace;padding-left:1px;background:#f8f8f8}

.taskbar{height:40px;background:#0b1114;display:flex;align-items:center;position:relative}
.start{width:48px;height:40px;background:#050505;display:flex;align-items:center;justify-content:center}
.tasksearch{width:344px;height:40px;background:#f0f0f0;border-top:1px solid #bbb;display:flex;align-items:center;padding-left:10px;color:#333;font-size:13.900px}
.tsearchtxt{margin-left:10px;width:277px}
.tk{height:40px;display:flex;align-items:center;justify-content:center;flex:none}
.w48{width:48px}.w52{width:52px}.w50{width:50px}.w44{width:44px}.w41{width:41px}.w40{width:40px}
.ul{position:relative}
.ul::after{content:"";position:absolute;left:4px;right:4px;bottom:0;height:2px;background:#76b9ed}
.widget{width:150px;height:29px;background:#444;border:1px solid #5a5a5a;display:flex;align-items:center;padding-left:3px;color:#aaa;flex:none}
.widgettxt{margin-left:5px;width:93px}
.active{width:40px;background:#3c3c3c;border-bottom:2px solid #76b9ed;margin-left:1px}
.tscroll{width:17px;height:40px;margin-left:2px;background:#f0f0f0;display:flex;flex-direction:column;align-items:center;justify-content:center;gap:14px;flex:none}
.tray{display:flex;align-items:center;height:40px;margin-left:15px;color:#fff}
.tc{height:40px;display:flex;align-items:center;justify-content:center;flex:none}
.w30{width:30px}.w10{width:10px}.w23{width:23px}.w24{width:24px}.w25{width:25px}.w20{width:20px}.w38{width:38px}.w16{width:16px}.w36{width:36px}
.zh{font-size:13px}
.sglyph{fill:#fff;font:bold 13px "Liberation Sans",sans-serif}
.clock{width:72px;flex-direction:column;line-height:19px;color:#eee}
.notif{position:relative}
.badge{position:absolute;left:17px;top:16px;width:17px;height:17px;border-radius:50%;background:#3a3a3a;border:1px solid #888;color:#fff;font:bold 11px/15px "Liberation Sans",sans-serif;text-align:center}

.greenball{position:absolute;left:719px;top:-24px;width:44px;height:44px;border-radius:50%;background:linear-gradient(#6fd06a,#1fa03c);box-shadow:0 1px 2px 1px #9a9a9a;color:#fff;font:bold 11px/16px "Liberation Sans",sans-serif;text-align:center;padding-top:24px}
.ime{position:absolute;left:870px;top:9px;width:187px;height:24px;background:#fff;border:1px solid #b7cfe6;display:flex;align-items:center;padding-left:14px}
.ime svg+svg{margin-left:7px}
.ime>svg:nth-of-type(2){margin-left:6px}
.sglogo{position:absolute;left:-18px;top:-3px}
.sglyphbig{fill:#fff;font:bold 23px "Liberation Sans",sans-serif}
.imezh{color:#1576c4;font-size:15px;font-weight:700;width:16px}
.imepun{color:#1576c4;font:bold 14px/16px "Liberation Sans",sans-serif;width:20px;text-align:center}

.dialog{position:absolute;left:84px;top:362px;width:981px;height:366px;overflow:hidden;background:#f0f0f0;border:1px solid #3a8fd8;border-bottom:0;border-right:2px solid #4a90d9;display:flex;flex-direction:column}
.dlgtitle{height:30px;flex:none;background:#fff;display:flex;align-items:center;padding-left:7px}
.dlgname{margin-left:6px}
.dlgbtns{margin-left:auto;display:flex}
.dlgbody{flex:1;min-height:0;display:flex}
.dlgleft{width:290px;flex:none;padding-left:5px;border-right:1px solid #bbb;overflow:hidden}
.dlglabel{height:18px;padding-left:3px;line-height:12px}
.cells{display:grid;grid-template-columns:137px 137px;grid-auto-rows:145px;gap:3px}
.cell{border:1px solid #bdbdbd;padding:2px;background:#f4f4f4}
.cellinner{height:139px;background:#6f92a8;width:131px}
.selcell .cellinner{outline:2px solid #0ff}
.celllabel{height:22px;text-align:center;font-size:15px;line-height:22px;color:#50618f;white-space:nowrap}
.celllabel.up{margin-top:-5px}

.marks{position:absolute;left:0;top:0;pointer-events:none}
.marks ellipse{fill:none;stroke:#f00000;stroke-width:3}
```
